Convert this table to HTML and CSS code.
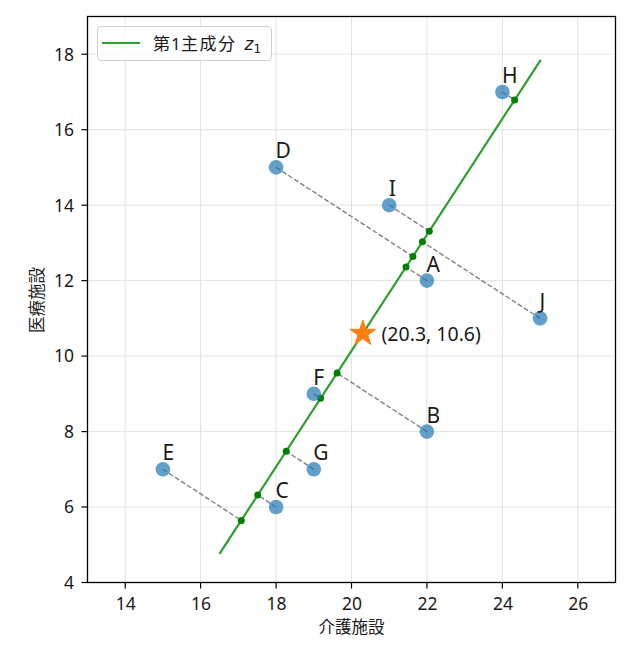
FILE: index.html
```html
<!DOCTYPE html>
<html lang="ja">
<head>
<meta charset="utf-8">
<title>第1主成分</title>
<link rel="stylesheet" href="styles.css">
</head>
<body>
<div class="figure">
<svg class="chart" width="640" height="648" viewBox="0 0 640 648" xmlns="http://www.w3.org/2000/svg">
  <g class="grid">
    <line x1="125.2" y1="16.5" x2="125.2" y2="582.5"/>
    <line x1="200.6" y1="16.5" x2="200.6" y2="582.5"/>
    <line x1="276.1" y1="16.5" x2="276.1" y2="582.5"/>
    <line x1="351.5" y1="16.5" x2="351.5" y2="582.5"/>
    <line x1="426.9" y1="16.5" x2="426.9" y2="582.5"/>
    <line x1="502.4" y1="16.5" x2="502.4" y2="582.5"/>
    <line x1="577.8" y1="16.5" x2="577.8" y2="582.5"/>
    <line x1="87.5" y1="507.0" x2="615.5" y2="507.0"/>
    <line x1="87.5" y1="431.6" x2="615.5" y2="431.6"/>
    <line x1="87.5" y1="356.1" x2="615.5" y2="356.1"/>
    <line x1="87.5" y1="280.6" x2="615.5" y2="280.6"/>
    <line x1="87.5" y1="205.2" x2="615.5" y2="205.2"/>
    <line x1="87.5" y1="129.7" x2="615.5" y2="129.7"/>
    <line x1="87.5" y1="54.2" x2="615.5" y2="54.2"/>
  </g>

  <g class="proj">
    <line x1="426.9" y1="280.6" x2="406.0" y2="267.0"/>
    <line x1="426.9" y1="431.6" x2="337.1" y2="373.1"/>
    <line x1="276.1" y1="507.0" x2="257.7" y2="495.1"/>
    <line x1="276.1" y1="167.4" x2="412.9" y2="256.5"/>
    <line x1="162.9" y1="469.3" x2="241.3" y2="520.4"/>
    <line x1="313.8" y1="393.8" x2="320.6" y2="398.3"/>
    <line x1="313.8" y1="469.3" x2="286.2" y2="451.3"/>
    <line x1="502.4" y1="92.0" x2="514.6" y2="99.9"/>
    <line x1="389.2" y1="205.2" x2="429.3" y2="231.2"/>
    <line x1="540.1" y1="318.4" x2="422.4" y2="241.8"/>
  </g>

  <line class="pc" x1="219.5" y1="553.8" x2="540.7" y2="59.9"/>

  <g class="pdot">
    <circle cx="406.0" cy="267.0" r="3.5"/>
    <circle cx="337.1" cy="373.1" r="3.5"/>
    <circle cx="257.7" cy="495.1" r="3.5"/>
    <circle cx="412.9" cy="256.5" r="3.5"/>
    <circle cx="241.3" cy="520.4" r="3.5"/>
    <circle cx="320.6" cy="398.3" r="3.5"/>
    <circle cx="286.2" cy="451.3" r="3.5"/>
    <circle cx="514.6" cy="99.9" r="3.5"/>
    <circle cx="429.3" cy="231.2" r="3.5"/>
    <circle cx="422.4" cy="241.8" r="3.5"/>
  </g>

  <g class="pts">
    <circle cx="426.9" cy="280.6" r="7.3"/>
    <circle cx="426.9" cy="431.6" r="7.3"/>
    <circle cx="276.1" cy="507.0" r="7.3"/>
    <circle cx="276.1" cy="167.4" r="7.3"/>
    <circle cx="162.9" cy="469.3" r="7.3"/>
    <circle cx="313.8" cy="393.8" r="7.3"/>
    <circle cx="313.8" cy="469.3" r="7.3"/>
    <circle cx="502.4" cy="92.0" r="7.3"/>
    <circle cx="389.2" cy="205.2" r="7.3"/>
    <circle cx="540.1" cy="318.4" r="7.3"/>
  </g>

  <path class="star" transform="translate(362.8 333.5)" d="M0,-13.5 L3.03,-4.17 L12.84,-4.17 L4.91,1.59 L7.94,10.92 L0,5.16 L-7.94,10.92 L-4.91,1.59 L-12.84,-4.17 L-3.03,-4.17 Z"/>

  <g class="plabel">
    <text x="426.4" y="271.6">A</text>
    <text x="426.4" y="422.6">B</text>
    <text x="275.6" y="498.0">C</text>
    <text x="275.6" y="158.4">D</text>
    <text x="162.4" y="460.3">E</text>
    <text x="313.3" y="384.8">F</text>
    <text x="313.3" y="460.3">G</text>
    <text x="501.9" y="83.0">H</text>
    <text x="388.7" y="196.2">I</text>
    <text x="539.6" y="309.4">J</text>
  </g>
  <text class="meanlabel" x="381.5" y="340.5">(20.3, 10.6)</text>

  <rect class="frame" x="87.5" y="16.5" width="528" height="566"/>

  <g class="ticks">
    <line x1="125.2" y1="582.5" x2="125.2" y2="588.5"/>
    <line x1="200.6" y1="582.5" x2="200.6" y2="588.5"/>
    <line x1="276.1" y1="582.5" x2="276.1" y2="588.5"/>
    <line x1="351.5" y1="582.5" x2="351.5" y2="588.5"/>
    <line x1="426.9" y1="582.5" x2="426.9" y2="588.5"/>
    <line x1="502.4" y1="582.5" x2="502.4" y2="588.5"/>
    <line x1="577.8" y1="582.5" x2="577.8" y2="588.5"/>
    <line x1="81.5" y1="582.5" x2="87.5" y2="582.5"/>
    <line x1="81.5" y1="507.0" x2="87.5" y2="507.0"/>
    <line x1="81.5" y1="431.6" x2="87.5" y2="431.6"/>
    <line x1="81.5" y1="356.1" x2="87.5" y2="356.1"/>
    <line x1="81.5" y1="280.6" x2="87.5" y2="280.6"/>
    <line x1="81.5" y1="205.2" x2="87.5" y2="205.2"/>
    <line x1="81.5" y1="129.7" x2="87.5" y2="129.7"/>
    <line x1="81.5" y1="54.2" x2="87.5" y2="54.2"/>
  </g>

  <g class="xtl">
    <text x="125.7" y="609.5">14</text>
    <text x="201.1" y="609.5">16</text>
    <text x="276.6" y="609.5">18</text>
    <text x="352.0" y="609.5">20</text>
    <text x="427.4" y="609.5">22</text>
    <text x="502.9" y="609.5">24</text>
    <text x="578.3" y="609.5">26</text>
  </g>
  <g class="ytl">
    <text x="74" y="588.8">4</text>
    <text x="74" y="513.3">6</text>
    <text x="74" y="437.9">8</text>
    <text x="74" y="362.4">10</text>
    <text x="74" y="286.9">12</text>
    <text x="74" y="211.5">14</text>
    <text x="74" y="136.0">16</text>
    <text x="74" y="60.5">18</text>
  </g>

  <text class="axlabel" x="351.5" y="633">介護施設</text>
  <text class="axlabel" transform="translate(43 300) rotate(-90)" x="0" y="0">医療施設</text>

  <g class="legend">
    <rect class="lbox" x="97.5" y="26.5" width="174" height="34" rx="3.5"/>
    <line class="pc" x1="102" y1="43" x2="140" y2="43"/>
    <text class="ltext" x="153" y="49.5">第<tspan x="171">1</tspan><tspan x="181" class="lsp">主成分</tspan></text>
    <text class="lmath" x="244.5" y="49.5">z<tspan class="lsub" dy="3.5">1</tspan></text>
  </g>
</svg>
</div>
</body>
</html>
```

FILE: styles.css
```css
html, body {
  margin: 0;
  padding: 0;
  background: #ffffff;
}
.figure {
  width: 640px;
  height: 648px;
}
.chart {
  display: block;
  font-family: "Noto Sans", "Noto Sans CJK JP", sans-serif;
}
.grid line {
  stroke: #e2e2e2;
  stroke-width: 1;
}
.proj line {
  stroke: #808080;
  stroke-width: 1.4;
  stroke-dasharray: 5 2.2;
}
.pc {
  stroke: #2ca02c;
  stroke-width: 2.2;
}
.pdot circle {
  fill: #008000;
}
.pts circle {
  fill: #1f77b4;
  fill-opacity: 0.7;
}
.star {
  fill: #ff7f0e;
  stroke: #ff7f0e;
  stroke-width: 1;
  stroke-linejoin: miter;
}
.plabel text {
  font-size: 21px;
  fill: #1a1a1a;
}
.meanlabel {
  font-size: 19.5px;
  fill: #1a1a1a;
}
.frame {
  fill: none;
  stroke: #000000;
  stroke-width: 1.3;
}
.ticks line {
  stroke: #000000;
  stroke-width: 1.2;
}
.xtl text {
  font-size: 17.5px;
  text-anchor: middle;
  fill: #1a1a1a;
}
.ytl text {
  font-size: 17.5px;
  text-anchor: end;
  fill: #1a1a1a;
}
.axlabel {
  font-family: "Noto Sans CJK JP", sans-serif;
  font-size: 16.5px;
  text-anchor: middle;
  fill: #1a1a1a;
}
.lbox {
  fill: #ffffff;
  fill-opacity: 0.8;
  stroke: #d0d0d0;
  stroke-width: 1;
}
.ltext {
  font-family: "Noto Sans", "Noto Sans CJK JP", sans-serif;
  font-size: 17px;
  fill: #1a1a1a;
}
.lsp {
  letter-spacing: 1.5px;
}
.lmath {
  font-family: "DejaVu Sans", sans-serif;
  font-style: italic;
  font-size: 17px;
  fill: #1a1a1a;
}
.lsub {
  font-style: normal;
  font-size: 12px;
}
```
